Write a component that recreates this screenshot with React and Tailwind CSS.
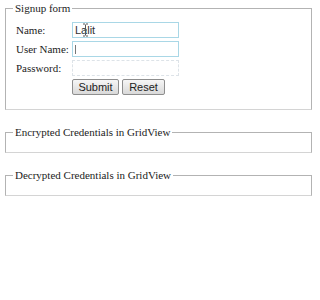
import React from 'react';

const serif = { fontFamily: '"Liberation Serif", "Times New Roman", serif' };

const Box = ({ title, children, className = '' }) => (
    <fieldset className={`ml-[5px] w-[307px] border border-[#b3b3b3] border-b-[#d4d4d4] px-[7px] ${className}`}>
        <legend className="px-[2px] text-[11px] leading-[13px] text-[#1c1c1c]">{title}</legend>
        {children}
    </fieldset>
);

// text cursor hovering over the name field
const IBeam = () => (
    <svg className="absolute left-[9px] top-[0px]" width="7" height="14" viewBox="0 0 7 14">
        <path d="M1 1h2M4 1h2M3.5 1.5v11M1 13h2M4 13h2M2 7h3" stroke="#555" strokeWidth="1" fill="none" />
    </svg>
);

const App = () => {
    return (
        <div className="w-[320px] h-[300px] bg-white pt-[2px]" style={serif}>
            <Box title="Signup form" className="pb-[14px]">
                <div className="mt-[7px] ml-[3px] grid grid-cols-[56px_107px] gap-y-[3px] items-center text-[11px] leading-[14px] text-[#1c1c1c]">
                    <span>Name:</span>
                    <div className="relative h-[16px] border border-[#a9d7e6] bg-white pl-[2px] font-['Liberation_Sans',Arial,sans-serif] text-[11px] leading-[14px] text-[#333]">
                        Lalit
                        <IBeam />
                    </div>
                    <span>User Name:</span>
                    <div className="relative h-[16px] border border-[#a9d7e6] bg-white">
                        <span className="absolute left-[2px] top-[3px] h-[9px] w-px bg-[#777]" />
                    </div>
                    <span>Password:</span>
                    <div className="h-[16px] border border-dashed border-[#dde3e8] bg-white" />
                    <span />
                    <div className="flex gap-[3px] font-['Liberation_Sans',Arial,sans-serif] text-[11px] text-[#222]">
                        <button className="h-[16px] w-[47px] rounded-[2px] border border-[#8e8e8e] bg-gradient-to-b from-[#f6f6f6] to-[#d9d9d9] leading-[13px]">
                            Submit
                        </button>
                        <button className="h-[16px] w-[43px] rounded-[2px] border border-[#8e8e8e] bg-gradient-to-b from-[#f6f6f6] to-[#d9d9d9] leading-[13px]">
                            Reset
                        </button>
                    </div>
                </div>
            </Box>
            <Box title="Encrypted Credentials in GridView" className="mt-[16px] h-[27px]" />
            <Box title="Decrypted Credentials in GridView" className="mt-[16px] h-[27px]" />
        </div>
    );
};

export default App;
